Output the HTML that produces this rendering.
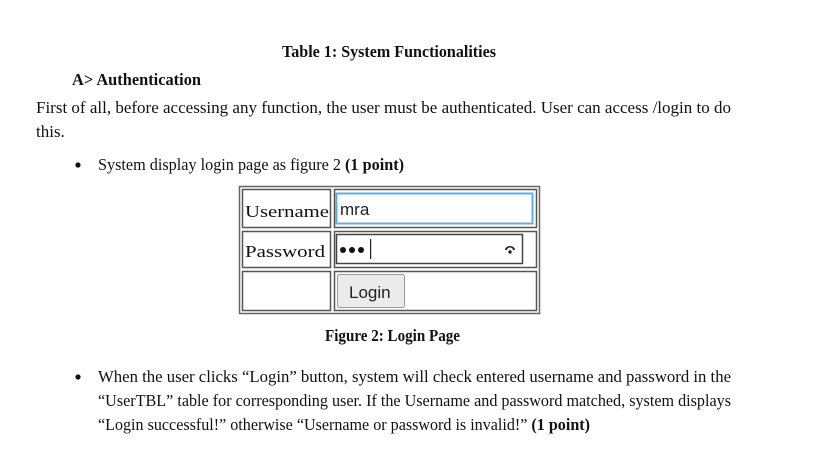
<!DOCTYPE html>
<html><head><meta charset="utf-8"><style>
html,body{margin:0;padding:0;background:#fff;}
svg{display:block}
.s{font-family:"Liberation Serif",serif;fill:#111;font-size:17px}
.b{font-weight:bold}
.a{font-family:"Liberation Sans",sans-serif;fill:#222}
</style></head><body>
<svg width="834" height="469" viewBox="0 0 834 469" xmlns="http://www.w3.org/2000/svg">
<text class="s b" x="282" y="57" textLength="214" lengthAdjust="spacingAndGlyphs">Table 1: System Functionalities</text>
<text class="s b" x="72" y="85" textLength="129" lengthAdjust="spacingAndGlyphs">A&gt; Authentication</text>
<text class="s" x="36" y="113" textLength="695" lengthAdjust="spacingAndGlyphs">First of all, before accessing any function, the user must be authenticated. User can access /login to do</text>
<text class="s" x="36" y="137">this.</text>
<circle cx="78" cy="165" r="2.6" fill="#111"/>
<text class="s" x="98" y="170" textLength="306" lengthAdjust="spacingAndGlyphs">System display login page as figure 2 <tspan class="b">(1 point)</tspan></text>

<rect x="239.5" y="186.5" width="300" height="127" fill="#fff" stroke="#666" stroke-width="1.5"/>
<g fill="none" stroke="#555" stroke-width="1.5">
<rect x="242.5" y="189.5" width="88" height="38"/>
<rect x="334.5" y="189.5" width="202" height="38"/>
<rect x="242.5" y="231.5" width="88" height="36"/>
<rect x="334.5" y="231.5" width="202" height="36"/>
<rect x="242.5" y="271.5" width="88" height="39"/>
<rect x="334.5" y="271.5" width="202" height="39"/>
</g>
<rect x="336.5" y="193.5" width="196" height="30" fill="#fff" stroke="#5fb0e0" stroke-width="2"/>
<rect x="336.5" y="234.5" width="186" height="29" fill="#fff" stroke="#444" stroke-width="1.5"/>
<text class="s" x="245" y="217" font-size="22" textLength="84" lengthAdjust="spacingAndGlyphs">Username</text>
<text class="s" x="245" y="257" font-size="22" textLength="80" lengthAdjust="spacingAndGlyphs">Password</text>
<text class="a" x="340" y="215" font-size="17">mra</text>
<circle cx="343" cy="250" r="3" fill="#111"/><circle cx="352" cy="250" r="3" fill="#111"/><circle cx="361" cy="250" r="3" fill="#111"/>
<rect x="370" y="239" width="1.2" height="20" fill="#222"/>
<path d="M505 250 a5 4 0 0 1 10 0 l-2 0 a3 2.5 0 0 0 -6 0 z" fill="#222"/>
<circle cx="510" cy="252" r="1.7" fill="#222"/>
<rect x="337.5" y="274.5" width="67" height="33" rx="2" fill="#ebebeb" stroke="#999"/>
<text class="a" x="349" y="298" font-size="17">Login</text>

<text class="s b" x="325" y="341" textLength="135" lengthAdjust="spacingAndGlyphs">Figure 2: Login Page</text>

<circle cx="78" cy="377" r="2.6" fill="#111"/>
<text class="s" x="98" y="382" textLength="633" lengthAdjust="spacingAndGlyphs">When the user clicks “Login” button, system will check entered username and password in the</text>
<text class="s" x="98" y="406" textLength="633" lengthAdjust="spacingAndGlyphs">“UserTBL” table for corresponding user. If the Username and password matched, system displays</text>
<text class="s" x="98" y="430" textLength="492" lengthAdjust="spacingAndGlyphs">“Login successful!” otherwise “Username or password is invalid!” <tspan class="b">(1 point)</tspan></text>
</svg>
</body></html>
